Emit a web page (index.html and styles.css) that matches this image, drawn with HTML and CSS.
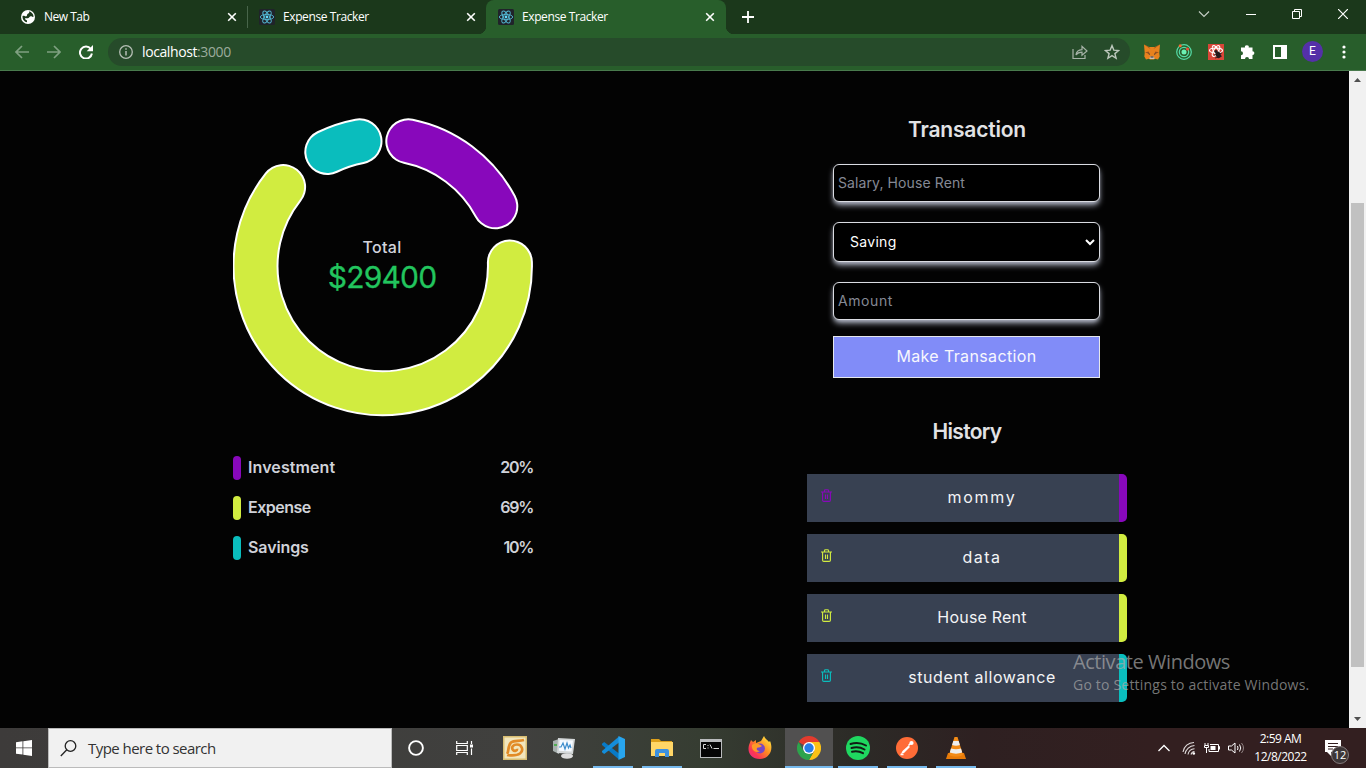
FILE: index.html
```html
<!DOCTYPE html>
<html lang="en">
<head>
<meta charset="utf-8">
<title>Expense Tracker</title>
<link rel="stylesheet" href="styles.css">
</head>
<body>
<svg class="defs" width="0" height="0">
  <symbol id="react" viewBox="0 0 16 16">
    <rect width="16" height="16" rx="1.5" fill="#20232a"/>
    <g fill="none" stroke="#53b9d4" stroke-width=".9">
      <ellipse cx="8" cy="8" rx="6.7" ry="2.6"/>
      <ellipse cx="8" cy="8" rx="6.7" ry="2.6" transform="rotate(60 8 8)"/>
      <ellipse cx="8" cy="8" rx="6.7" ry="2.6" transform="rotate(120 8 8)"/>
    </g>
    <circle cx="8" cy="8" r="1.4" fill="#61dafb"/>
  </symbol>
  <symbol id="close" viewBox="0 0 10 10"><path d="M1.2 1.2l7.6 7.6M8.8 1.2L1.2 8.8" stroke="#fff" stroke-width="1.6"/></symbol>
  <symbol id="trash" viewBox="0 0 11 13">
    <path d="M0 3h11M3.500 3V1.600Q3.500.7 4.500.7h2q1 0 1 .9V3M1.600 3v8.200q0 1.200 1.200 1.200h5.400q1.200 0 1.200-1.200V3M4.500 5.500v4.500M6.500 5.500v4.500" fill="none" stroke="currentColor" stroke-width="1.150"/>
  </symbol>
</svg>

<header class="tabs">
  <div class="tab first">
    <svg width="14" height="14" viewBox="0 0 14 14"><circle cx="7" cy="7" r="7" fill="#fff"/><path d="M1.500 6C3 5 4 6.800 5.500 6.300 6.600 5.500 5.500 4 7.300 3.600 8.300 3.200 8.500 2 8 1.300c2.500.5 4.500 2.700 4.600 5.500-1.500.5-1.600-.8-3.100-.5-1.500.4-.8 1.700-2.600 1.900-1 .2-2.400-.4-2.900.3C3.500 9.500 5 9.700 6 10.500v1.800C3.500 12 1.300 9.500 1.500 6z" fill="#1b381b"/></svg>
    <span>New Tab</span>
    <svg class="x" width="10" height="10"><use href="#close"/></svg>
  </div>
  <div class="tab second">
    <svg width="16" height="16"><use href="#react"/></svg>
    <span>Expense Tracker</span>
    <svg class="x" width="10" height="10"><use href="#close"/></svg>
  </div>
  <div class="tab active">
    <svg width="16" height="16"><use href="#react"/></svg>
    <span>Expense Tracker</span>
    <svg class="x" width="10" height="10"><use href="#close"/></svg>
  </div>
  <svg class="plus" width="12" height="12" viewBox="0 0 12 12"><path d="M6 0v12M0 6h12" stroke="#fff" stroke-width="1.8"/></svg>
  <div class="window-buttons">
    <svg width="12" height="10" viewBox="0 0 12 10"><path d="M1 2.500l5 5 5-5" stroke="#c3cdc3" stroke-width="1.200" fill="none"/></svg>
    <svg width="10" height="10" viewBox="0 0 10 10"><path d="M0 5.500h10" stroke="#fff"/></svg>
    <svg width="10" height="10" viewBox="0 0 10 10"><path d="M.5 2.500h7v7h-7zM2.500 2V.5h7v7H8" stroke="#fff" fill="none"/></svg>
    <svg width="10" height="10" viewBox="0 0 10 10"><path d="M0 0l10 10M10 0L0 10" stroke="#fff" stroke-width="1.200"/></svg>
  </div>
</header>

<div class="toolbar">
  <nav class="nav">
    <svg width="14" height="14" viewBox="0 0 14 14"><path d="M14 7H1M7 1L1 7l6 6" fill="none" stroke="#7fa081" stroke-width="1.700"/></svg>
    <svg width="14" height="14" viewBox="0 0 14 14"><path d="M0 7h13M7 1l6 6-6 6" fill="none" stroke="#7fa081" stroke-width="1.700"/></svg>
    <svg width="14" height="14" viewBox="0 0 14 14"><path d="M11.800 4A6 6 0 1 0 12.900 8.500" fill="none" stroke="#fff" stroke-width="2"/><path d="M14 0v6.300H7.700z" fill="#fff"/></svg>
  </nav>
  <div class="address">
    <svg width="14" height="14" viewBox="0 0 14 14"><circle cx="7" cy="7" r="6.300" fill="none" stroke="#b5beb5" stroke-width="1.300"/><path d="M7 6v4.500M7 3.300v1.500" stroke="#b5beb5" stroke-width="1.500"/></svg>
    <span class="url">localhost<i>:3000</i></span>
    <svg class="share" width="16" height="16" viewBox="0 0 16 16"><path d="M1 5v9.500h12V11" fill="none" stroke="#a7b3a8" stroke-width="1.200"/><path d="M4 11c.3-3.500 2-5.200 6-5.400V2.300L15 7l-5 4.300V8.200C7 8.200 5.300 9 4 11z" fill="none" stroke="#a7b3a8" stroke-width="1.200"/></svg>
    <svg width="16" height="16" viewBox="0 0 16 16"><path d="M8 1.600l1.800 4.500 4.800.4-3.700 3.100 1.200 4.700L8 11.700l-4.100 2.600 1.200-4.700L1.400 6.500l4.800-.4z" fill="none" stroke="#bcc7bc" stroke-width="1.400"/></svg>
  </div>
  <div class="extensions">
    <svg width="16" height="16" viewBox="0 0 16 16"><path d="M0 .5l5 2.500h6l5-2.500-.7 8.500.4 3.500-1.700 3-3-.8-1 .8H6l-1-.8-3 .8-1.700-3 .4-3.500z" fill="#e8821e"/><path d="M0 .5L6.500 5 5 3zM16 .5L9.500 5 11 3zM1 8.500l3.500-1L6 10zM15 8.500l-3.500-1L10 10z" fill="#97501f"/><path d="M6 12.500h4l.5 2.500h-5z" fill="#cfc0b2"/><path d="M3.500 9.500l2 .3.500 1.300zM12.500 9.500l-2 .3-.5 1.300zM6.500 12.500h3v1h-3z" fill="#27313a"/></svg>
    <svg width="16" height="16" viewBox="0 0 16 16"><g fill="none" stroke="#55dba7" stroke-width="1.200"><circle cx="8" cy="8" r="7.300"/><circle cx="8" cy="8" r="4.700"/></g><circle cx="8" cy="8" r="2.500" fill="#6cf0b4"/><circle cx="4.200" cy="1.800" r="1.500" fill="#f36b34"/><circle cx="11.500" cy="5" r="1.500" fill="#f34d34"/></svg>
    <svg width="16" height="16" viewBox="0 0 16 16"><path fill="#d94638" d="M0 0h16v16H0z"/><g fill="none" stroke="#fff" stroke-width="1.100"><ellipse cx="8" cy="6.500" rx="6.500" ry="2.500"/><ellipse cx="8" cy="7" rx="6" ry="2.400" transform="rotate(60 8 7)"/><ellipse cx="8" cy="7" rx="6" ry="2.400" transform="rotate(120 8 7)"/></g><ellipse cx="10.300" cy="11" rx="2.500" ry="3.300" fill="#22191b" transform="rotate(-25 10 11)"/><circle cx="8" cy="7.500" r="1.500" fill="#22191b"/><path d="M6 11l8-2M7 14l7-2" stroke="#22191b" stroke-width=".8"/></svg>
    <svg width="16" height="16" viewBox="0 0 16 16"><path fill="#fff" d="M1 3.500h4a1.900 1.900 0 1 1 3.700 0h3.800v3.700a1.900 1.900 0 1 1 0 3.800v4H9a2 2 0 0 0-4 0H1v-3.800a2 2 0 0 0 0-4z"/></svg>
    <svg width="16" height="16" viewBox="0 0 16 16"><path fill="#fff" fill-rule="evenodd" d="M1 1h14v14H1zM3 3v10h6V3z"/></svg>
    <b class="avatar">E</b>
    <svg class="menu" width="4" height="14" viewBox="0 0 4 14"><g fill="#fff"><circle cx="2" cy="2" r="1.600"/><circle cx="2" cy="7" r="1.600"/><circle cx="2" cy="12" r="1.600"/></g></svg>
  </div>
</div>

<div class="viewport">
  <main class="page">
    <section class="summary">
      <div class="chart">
        <svg width="300" height="300" viewBox="233 117 300 300" fill="none" stroke-linecap="round">
          <g stroke="#fff" stroke-width="46">
            <path d="M408.300 141.300A127.800 127.800 0 0 1 495.300 206.300"/>
            <path d="M509.900 262.500A127.200 127.200 0 1 1 283.100 187"/>
            <path d="M327.300 152A127 127 0 0 1 359.500 141.300"/>
          </g>
          <g stroke-width="42">
            <path stroke="#8808bb" d="M408.300 141.300A127.800 127.800 0 0 1 495.300 206.300"/>
            <path stroke="#d1ec40" d="M509.900 262.500A127.200 127.200 0 1 1 283.100 187"/>
            <path stroke="#0abdbd" d="M327.300 152A127 127 0 0 1 359.500 141.300"/>
          </g>
        </svg>
        <div class="total"><span>Total</span><strong>$29400</strong></div>
      </div>
      <ul class="legend">
        <li class="investment"><i></i><span>Investment</span><b>20%</b></li>
        <li class="expense"><i></i><span>Expense</span><b>69%</b></li>
        <li class="saving"><i></i><span>Savings</span><b>10%</b></li>
      </ul>
    </section>
    <section class="side">
      <h2 class="h-transaction">Transaction</h2>
      <form class="form">
        <div class="field ph f1">Salary, House Rent</div>
        <div class="field select"><span>Saving</span><svg width="10" height="7" viewBox="0 0 10 7"><path d="M1 1l4 4 4-4" fill="none" stroke="#fff" stroke-width="2"/></svg></div>
        <div class="field ph f3">Amount</div>
        <div class="submit">Make Transaction</div>
      </form>
      <h2 class="h-history">History</h2>
      <ul class="history">
        <li class="investment"><svg width="11" height="13"><use href="#trash"/></svg><span class="t1">mommy</span></li>
        <li class="expense"><svg width="11" height="13"><use href="#trash"/></svg><span class="t2">data</span></li>
        <li class="expense"><svg width="11" height="13"><use href="#trash"/></svg><span class="t3">House Rent</span></li>
        <li class="saving"><svg width="11" height="13"><use href="#trash"/></svg><span class="t4">student allowance</span></li>
      </ul>
    </section>
    <div class="watermark"><p class="w1">Activate Windows</p><p class="w2">Go to Settings to activate Windows.</p></div>
  </main>
  <div class="scrollbar">
    <svg width="17" height="17" viewBox="0 0 17 17"><path d="M5 11l3.500-4 3.500 4z" fill="#505050"/></svg>
    <div class="thumb"></div>
    <svg width="17" height="17" viewBox="0 0 17 17"><path d="M5 6l3.500 4L12 6z" fill="#505050"/></svg>
  </div>
</div>

<footer class="taskbar">
  <div class="start"><svg width="16" height="16" viewBox="0 0 16 16"><path fill="#fff" d="M0 2.200l6.500-.9v6.200H0zM7.300 1.200L16 0v7.500H7.300zM0 8.300h6.500v6.300L0 13.800zM7.300 8.300H16V16l-8.700-1.200z"/></svg></div>
  <div class="search"><svg width="17" height="17" viewBox="0 0 17 17"><circle cx="10.500" cy="6" r="5.300" fill="none" stroke="#222" stroke-width="1.300"/><path d="M6.800 9.800L.8 16" stroke="#222" stroke-width="1.300"/></svg><span>Type here to search</span></div>
  <div class="slot"><svg width="16" height="16" viewBox="0 0 16 16"><circle cx="8" cy="8" r="6.900" fill="none" stroke="#fff" stroke-width="1.900"/></svg></div>
  <div class="slot"><svg width="17" height="16" viewBox="0 0 17 16"><path d="M.7 1v2.500h10.600V1M.7 15v-2.500h10.600V15M.7 5.500h10.600v5H.7zM15.500 1v3M15.500 8.500V15" fill="none" stroke="#fff" stroke-width="1.200"/><path fill="#fff" d="M14 4.500h3v3h-3z"/></svg></div>
  <div class="apps">
    <div class="slot"><svg width="24" height="24" viewBox="0 0 24 24"><path fill="#d8bd72" d="M0 0h24v24H0z"/><path fill="#f2e6bd" d="M1.500 1.500h21v21h-21z"/><path d="M4 19c4 .5 10 .7 13-1.500 4-3 2-9-3-9-4 0-6 3-4 5.500 1.600 1.600 4.300.6 4-1.300M4 18c2-2 .5-8 4-11.500C11 4 16 5.500 21 4" fill="none" stroke="#e28b27" stroke-width="2.700"/></svg></div>
    <div class="slot"><svg width="24" height="22" viewBox="0 0 24 22"><path fill="#a7b0ae" d="M1 4l6-2v15l-6-3z"/><path fill="#52ad55" d="M2 7h3v2H2z"/><ellipse cx="15" cy="19" rx="6" ry="2.700" fill="#dedede"/><path fill="#d4d8d9" d="M6 1l17 1-2 15-16-1z"/><path fill="#f6faff" d="M7.500 3L21 3.500l-1.500 11-12.500-.7z"/><path d="M7 10h2l2-4 2 6 2-6 1.500 5L18 8l1 3" fill="none" stroke="#3e8dcc" stroke-width="1.200"/></svg></div>
    <div class="slot open"><svg width="24" height="24" viewBox="0 0 24 24"><path fill="#087ac7" d="M1 7.700L3.200 6 18 17.500v6L1 9z"/><path fill="#148dda" d="M1 16.300L3.200 18 18 6.500V.5L1 15z"/><path fill="#28a5ee" d="M17.500 0L24 3v18l-6.500 3z"/></svg></div>
    <div class="slot open"><svg width="22" height="20" viewBox="0 0 22 20"><path fill="#dda01b" d="M0 1h8l2 2h11v5H0z"/><path fill="#ffd667" d="M0 4h22v14H0z"/><path fill="#3d91df" d="M4 19v-6q0-2 2-2h10q2 0 2 2v6h-4v-4H8v4z"/></svg></div>
    <div class="slot"><svg width="22" height="19" viewBox="0 0 22 19"><path fill="#b9bbbd" d="M0 0h22v19H0z"/><path fill="#050505" d="M1 3h20v15H1z"/><path d="M6 5.500H3.500v4H6M8 6v1m0 1.500v1M10 5.500l2 4M13.500 9.500H19" fill="none" stroke="#d6d6d6"/></svg></div>
    <div class="slot"><svg width="24" height="24" viewBox="0 0 24 24"><defs><linearGradient id="fox" x1="1" x2="0" y1="0" y2="1"><stop offset=".1" stop-color="#ffe13f"/><stop offset=".45" stop-color="#ff8a22"/><stop offset=".75" stop-color="#fb3554"/><stop offset="1" stop-color="#e42a90"/></linearGradient></defs><path fill="url(#fox)" d="M1 9l2-5 2 2 3-2v3l5-2 3-5c1 3 4 4 5 6l1-1c4 9-1 18-10 18S-1 17 1 9z"/><circle cx="12" cy="12.500" r="4.900" fill="#7747c5"/><path fill="#ff9a27" d="M4 9c4-3 7-1 10 1-2 2-4 1-5 2-1 2 1 3 3 3-5 3-9-2-8-6z"/></svg></div>
    <div class="slot open current"><svg width="24" height="24" viewBox="0 0 24 24"><path fill="#e33b2e" d="M12 12L1.600 6A12 12 0 0 1 22.400 6z"/><path fill="#fbc116" d="M12 12V6h10.400A12 12 0 0 1 12 24l5.200-9z"/><path fill="#2da34c" d="M1.600 6l5.200 9L12 18l3.500-.5L12 24A12 12 0 0 1 1.600 6z"/><circle cx="12" cy="12" r="6" fill="#fff"/><circle cx="12" cy="12" r="4.700" fill="#287ce8"/></svg></div>
    <div class="slot open"><svg width="24" height="24" viewBox="0 0 24 24"><circle cx="12" cy="12" r="12" fill="#1fd760"/><path d="M4.500 8c5-1.500 11-1 15.500 1.500M5.500 12c4.500-1.200 9-.8 13 1.500M6 15.700c4-1 7.500-.5 11 1.500" fill="none" stroke="#111b14" stroke-width="2" stroke-linecap="round"/></svg></div>
    <div class="slot open"><svg width="22" height="22" viewBox="0 0 22 22"><circle cx="11" cy="11" r="11" fill="#ff6c37"/><path d="M5 17l1.500-3 6-5.500 1.500 1.500-6 6z" fill="#fff"/><path d="M12.500 8.500l3-3M4.500 17.500h3" stroke="#fff" stroke-width="1.500"/><circle cx="15.500" cy="6" r="2.100" fill="#fff"/></svg></div>
    <div class="slot open"><svg width="22" height="24" viewBox="0 0 22 24"><path fill="#e77a08" d="M3 17h16l2 6H1z"/><path fill="#f38b16" d="M9.500 1h3L18 19c-4 2-10 2-14 0z"/><path fill="#eee" d="M8.300 5h5.400l1.200 4c-2.500 1-5.300 1-7.800 0zM6 12.500c3 1 7 1 10 0l1.200 4c-4 1.500-8.400 1.500-12.400 0z"/></svg></div>
  </div>
  <div class="tray">
    <svg width="12" height="8" viewBox="0 0 12 8"><path d="M.5 7L6 1.500 11.500 7" fill="none" stroke="#fff" stroke-width="1.300"/></svg>
    <svg width="14" height="14" viewBox="0 0 14 14"><g fill="none" stroke="#e1dcdc" stroke-width="1.100"><path d="M1 11A11 11 0 0 1 12 1.500M3 13A10 10 0 0 1 12.500 4.500M6 13.500A7 7 0 0 1 12.500 7.700M9 13.500A4 4 0 0 1 12.500 10.500"/></g><circle cx="11.800" cy="12.500" r="1.300" fill="#fff"/></svg>
    <svg width="16" height="12" viewBox="0 0 16 12"><path d="M6 2.500h8.500v7H5V7M14.500 4.500h1v3M1 1v2M4 1v2M.5 3.500h4v2h-4zM2.500 6v5" fill="none" stroke="#fff"/><path fill="#fff" d="M6.500 4h5v4h-5z"/></svg>
    <svg width="17" height="12" viewBox="0 0 17 12"><path d="M.5 4h3L7 1v10L3.500 8h-3zM9.500 4q1 2 0 4M11.500 2.500q2.500 3.500 0 7" fill="none" stroke="#fff"/><path d="M13.500 1q4 5 0 10" fill="none" stroke="#938686"/></svg>
  </div>
  <div class="clock"><span>2:59 AM</span><span>12/8/2022</span></div>
  <div class="notice"><svg width="16" height="16" viewBox="0 0 16 16"><path fill="#fff" d="M0 0h16v12H6v4l-4-4H0z"/><path d="M3 3.500h10M3 6.500h10M3 9h5" stroke="#331f20"/></svg><b>12</b></div>
</footer>
</body>
</html>
```

FILE: styles.css
```css
* { box-sizing: border-box; }
body { margin: 0; width: 1366px; height: 768px; overflow: hidden; display: flex; flex-direction: column; background: #030303; font-family: Inter, sans-serif; }
p, h2, ul { margin: 0; padding: 0; list-style: none; }
svg { display: block; flex: none; }
.defs { position: absolute; }

.tabs { height: 34px; background: #1b381b; display: flex; font: 12px "Open Sans", sans-serif; color: #fff; padding-left: 8px; }
.tab { width: 239px; height: 34px; display: flex; align-items: center; gap: 8px; padding: 0 11px 0 11px; letter-spacing: -.4px; }
.tab span { padding-bottom: 1px; }
.tab.first { width: 240px; padding: 0 10px 0 13px; gap: 9px; letter-spacing: -.5px; border-right: 1px solid #48654a; border-image: linear-gradient(transparent 20%, #48654a 20% 80%, transparent 80%) 1; }
.tab .x { margin-left: auto; }
.tab.active { position: relative; left: -1px; width: 240px; padding-left: 12px; background: #285e2b; border-radius: 8px 8px 0 0; }
.tab.active::before, .tab.active::after { content: ""; position: absolute; bottom: 0; width: 8px; height: 8px; }
.tab.active::before { left: -8px; background: radial-gradient(circle at 0 0, transparent 8px, #285e2b 8.500px); }
.tab.active::after { right: -8px; background: radial-gradient(circle at 100% 0, transparent 8px, #285e2b 8.500px); }
.plus { margin: 11px 0 0 15px; }
.window-buttons { margin-left: auto; display: flex; gap: 36px; padding: 9px 18px 0 0; }

.toolbar { height: 37px; background: #285e2b; border-bottom: 1px solid #497a4d; display: flex; align-items: center; padding-bottom: 1px; }
.nav { display: flex; gap: 18px; padding-left: 15px; width: 108px; }
.address { width: 1022px; height: 28px; border-radius: 14px; background: #264b2a; display: flex; align-items: center; padding: 0 10px 0 11px; gap: 8px; font: 14px "Open Sans", sans-serif; color: #fff; }
.url { letter-spacing: -.4px; padding-left: 1px; }
.url i { font-style: normal; color: #9cab9d; }
.share { margin-left: auto; margin-right: 8px; }
.extensions { display: flex; align-items: center; gap: 16px; padding-left: 14px; }
.avatar { width: 21px; height: 21px; margin: 0 -2px; border-radius: 50%; background: #5430a8; color: #fff; font: 12px/21px Roboto, sans-serif; text-align: center; }
.menu { margin-left: 5px; }

.viewport { height: 657px; display: flex; }
.page { position: relative; width: 1349px; background: #030303; display: flex; }
.summary { width: 533px; padding: 46px 0 0 233px; }
.chart { position: relative; width: 300px; height: 300px; }
.total { position: absolute; inset: 119px 0 auto 0; text-align: center; display: flex; flex-direction: column; padding-right: 2px; color: #d2d3dc; font-size: 16px; line-height: 22px; font-weight: 500; letter-spacing: .3px; }
.total strong { font-size: 30px; font-weight: 400; line-height: 39px; color: #22c55e; letter-spacing: -.8px; -webkit-text-stroke: .3px #22c55e; }
.legend { margin-top: 39px; display: grid; gap: 16px; }
.legend li { height: 24px; display: flex; gap: 7px; line-height: 23px; font-size: 16px; color: #d0d2d9; font-weight: 600; letter-spacing: .1px; }
.legend .expense { letter-spacing: -.5px; }
.legend .saving { letter-spacing: -.1px; }
.legend i { width: 8px; height: 24px; border-radius: 4px; background: var(--c); }
.legend b { margin-left: auto; font-weight: 600; letter-spacing: -1.3px; }
.investment { --c: #8808bb; }
.expense { --c: #d1ec40; }
.saving { --c: #0abdbd; }

.side { margin-left: 274px; width: 320px; padding-top: 44px; }
h2 { font-size: 21px; line-height: 30px; font-weight: 600; color: #e1e2e5; text-align: center; letter-spacing: -.2px; }
.form { width: 267px; margin: 19px 0 0 26px; display: flex; flex-direction: column; }
.field { border: 1px solid #dadce2; border-radius: 6px; background: #000; color: #fff; height: 38px; padding: 0 4px; line-height: 36px; font-size: 14px; box-shadow: 0 4px 6px -1px #aeb3c2, 0 2px 4px -2px #aeb3c2; }
.ph { color: #858995; }
.f1 { letter-spacing: .1px; }
.f3 { letter-spacing: .6px; }
.select { height: 40px; margin: 20px 0; padding-left: 16px; line-height: 38px; letter-spacing: .3px; display: flex; justify-content: space-between; align-items: center; }
.submit { height: 42px; margin-top: 16px; border: 1px solid #e5e7eb; background: #818cf8; color: #f7f7fd; text-align: center; line-height: 39px; font-size: 16px; letter-spacing: .37px; }
.h-history { margin-top: 39px; letter-spacing: -.7px; }
.history { margin-top: 27px; display: grid; gap: 12px; }
.history li { height: 48px; background: #384152; border-right: 8px solid var(--c); border-radius: 0 5px 5px 0; display: flex; padding: 15px 0 0 14px; color: var(--c); }
.history span { flex: 1; text-align: center; color: #f3f4f6; line-height: 16px; font-size: 16px; padding-left: 13px; }
.t1 { letter-spacing: 1.7px; }
.t2 { letter-spacing: 1.5px; }
.t3 { letter-spacing: .2px; }
.t4 { letter-spacing: .6px; }
.watermark { position: absolute; left: 1073px; top: 578px; color: rgba(170,170,170,.7); font-family: "Open Sans", sans-serif; white-space: nowrap; }
.w1 { font-size: 20px; line-height: 26px; letter-spacing: -.45px; }
.w2 { font-size: 14px; line-height: 20px; letter-spacing: .2px; }
.scrollbar { width: 17px; background: #f1f1f1; display: flex; flex-direction: column; }
.thumb { width: 13px; height: 464px; margin: 115px 2px auto; background: #c1c1c1; }

.taskbar { height: 40px; display: flex; background: linear-gradient(90deg, #3d3b3a 0, #40403e 520px, #363d32 700px, #2c2b27 850px, #2e2021 980px, #331f20 1150px); color: #fff; font-family: "Open Sans", sans-serif; }
.start { width: 48px; display: grid; place-items: center; }
.search { width: 344px; background: #f1f1f1; border: 1px solid #bbb; display: flex; align-items: center; gap: 11px; padding-left: 11px; color: #333; font-size: 15px; letter-spacing: -.55px; }
.slot { width: 48px; height: 40px; display: grid; place-items: center; }
.apps { display: flex; gap: 1px; margin-left: 3px; }
.open { background: linear-gradient(#76b9ed, #76b9ed) center bottom / 40px 2px no-repeat; }
.current { background: linear-gradient(#76b9ed, #76b9ed) center bottom / 48px 2px no-repeat, #515050; }
.tray { display: flex; align-items: center; gap: 8px; margin-left: auto; }
.tray svg:first-child { margin-right: 4px; }
.clock { width: 71px; margin-right: 1px; display: flex; flex-direction: column; text-align: center; font-size: 12px; line-height: 18px; letter-spacing: -.5px; padding-top: 2px; }
.notice { position: relative; width: 49px; padding: 12px 0 0 8px; }
.notice b { position: absolute; left: 14px; top: 18px; width: 18px; height: 18px; border-radius: 50%; background: #3d3637; border: 1px solid #837a7b; font: 11px/16px "Open Sans", sans-serif; text-align: center; }
```
